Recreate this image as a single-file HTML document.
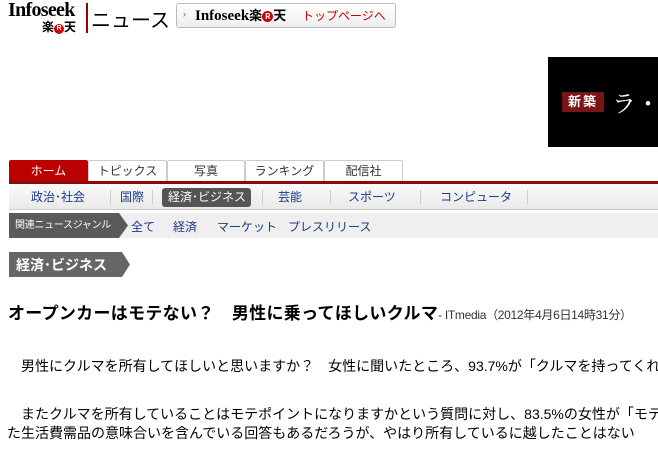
<!DOCTYPE html>
<html><head><meta charset="utf-8"><style>
*{margin:0;padding:0;box-sizing:border-box}
body{width:658px;height:464px;overflow:hidden;background:#fff;font-family:"Liberation Sans","Noto Sans CJK JP",sans-serif;color:#000;position:relative}
.a{position:absolute;white-space:nowrap}
.tab{position:absolute;top:160px;height:22px;border:1px solid #ccc;border-bottom:none;background:#fff;font-size:12px;line-height:20px;text-align:center;color:#333;border-radius:2px 2px 0 0}
.sn{position:absolute;top:186px;font-size:12px;color:#1a3a8a;line-height:22px}
.sep{position:absolute;top:190px;width:1px;height:14px;background:#ccc}
.gn{position:absolute;top:216px;font-size:12px;color:#1a3a8a;line-height:22px}
</style></head><body>
<div class="a" style="left:8px;top:-1px;font-family:'Liberation Serif',serif;font-weight:bold;font-size:20px;letter-spacing:-0.7px">Infoseek</div>
<div class="a" style="left:42px;top:18px;font-size:12px;font-weight:bold">楽<span style="display:inline-block;width:10px;height:10px;border-radius:50%;background:#c00;color:#fff;font-size:7px;line-height:10px;text-align:center;vertical-align:1px">R</span>天</div>
<div class="a" style="left:86px;top:3px;width:2px;height:30px;background:#900"></div>
<div class="a" style="left:91px;top:4px;font-size:20px">ニュース</div>
<div class="a" style="left:176px;top:3px;width:220px;height:25px;border:1px solid #bbb;border-radius:3px;background:linear-gradient(#fff,#eee)"></div>
<div class="a" style="left:183px;top:9px;font-size:9px;color:#666">›</div>
<div class="a" style="left:195px;top:5px;font-family:'Liberation Serif',serif;font-weight:bold;font-size:15px">Infoseek<span style="font-family:'Noto Sans CJK JP',sans-serif;font-size:13px">楽<span style="display:inline-block;width:11px;height:11px;border-radius:50%;background:#c00;color:#fff;font-size:8px;line-height:11px;text-align:center;vertical-align:1px">R</span>天</span></div>
<div class="a" style="left:302px;top:7px;font-size:12px;color:#c00">トップページへ</div>
<div class="a" style="left:548px;top:57px;width:110px;height:90px;background:#000"></div>
<div class="a" style="left:562px;top:92px;width:42px;height:20px;background:#7a1515;color:#fff;font-size:13px;font-weight:bold;line-height:20px;text-align:center;letter-spacing:2px">新築</div>
<div class="a" style="left:612px;top:84px;font-family:'Noto Serif CJK SC',serif;color:#fff;font-size:24px">ラ・ト</div>
<div class="tab" style="left:9px;width:79px;background:#b00;color:#fff;border-color:#b00">ホーム</div>
<div class="tab" style="left:88px;width:79px">トピックス</div>
<div class="tab" style="left:167px;width:78px">写真</div>
<div class="tab" style="left:245px;width:79px">ランキング</div>
<div class="tab" style="left:324px;width:79px">配信社</div>
<div class="a" style="left:9px;top:181px;width:649px;height:3px;background:#8a0a0a"></div>
<div class="a" style="left:9px;top:184px;width:649px;height:26px;background:linear-gradient(#fafafa,#e9e9e9);border-bottom:1px solid #ccc"></div>
<div class="sn" style="left:31px">政治･社会</div>
<div class="sep" style="left:110px"></div>
<div class="sn" style="left:120px">国際</div>
<div class="sep" style="left:152px"></div>
<div class="a" style="left:162px;top:188px;width:89px;height:19px;background:#555;border-radius:3px"></div>
<div class="sn" style="left:168px;color:#fff">経済･ビジネス</div>
<div class="sep" style="left:262px"></div>
<div class="sn" style="left:278px">芸能</div>
<div class="sep" style="left:330px"></div>
<div class="sn" style="left:348px">スポーツ</div>
<div class="sep" style="left:420px"></div>
<div class="sn" style="left:440px">コンピュータ</div>
<div class="sep" style="left:527px"></div>
<div class="a" style="left:9px;top:213px;width:649px;height:25px;background:#efefef"></div>
<svg class="a" style="left:9px;top:213px" width="122" height="25"><polygon points="0,0 110,0 119,12.5 110,25 0,25" fill="#5a5a5a"/></svg>
<div class="a" style="left:15px;top:219px;font-size:10px;color:#fff;line-height:13px;letter-spacing:-0.3px">関連ニュースジャンル</div>
<div class="gn" style="left:131px">全て</div>
<div class="gn" style="left:173px">経済</div>
<div class="gn" style="left:217px">マーケット</div>
<div class="gn" style="left:288px">プレスリリース</div>
<svg class="a" style="left:9px;top:252px" width="124" height="25"><polygon points="0,0 113,0 121,12.5 113,25 0,25" fill="#666"/></svg>
<div class="a" style="left:16px;top:255px;font-size:14px;font-weight:bold;color:#fff">経済･ビジネス</div>
<div class="a" style="left:8px;top:299px;font-size:17px;font-weight:bold;letter-spacing:0.3px">オープンカーはモテない？　男性に乗ってほしいクルマ<span style="font-weight:normal;font-size:12px;color:#333;letter-spacing:-0.3px">- ITmedia（2012年4月6日14時31分）</span></div>
<div class="a" style="left:7px;top:356px;font-size:14px">　男性にクルマを所有してほしいと思いますか？　女性に聞いたところ、93.7%が「クルマを持ってくれ</div>
<div class="a" style="left:7px;top:404px;font-size:14px">　またクルマを所有していることはモテポイントになりますかという質問に対し、83.5%の女性が「モテ</div>
<div class="a" style="left:7px;top:423px;font-size:14px">た生活費需品の意味合いを含んでいる回答もあるだろうが、やはり所有しているに越したことはない</div>
</body></html>
